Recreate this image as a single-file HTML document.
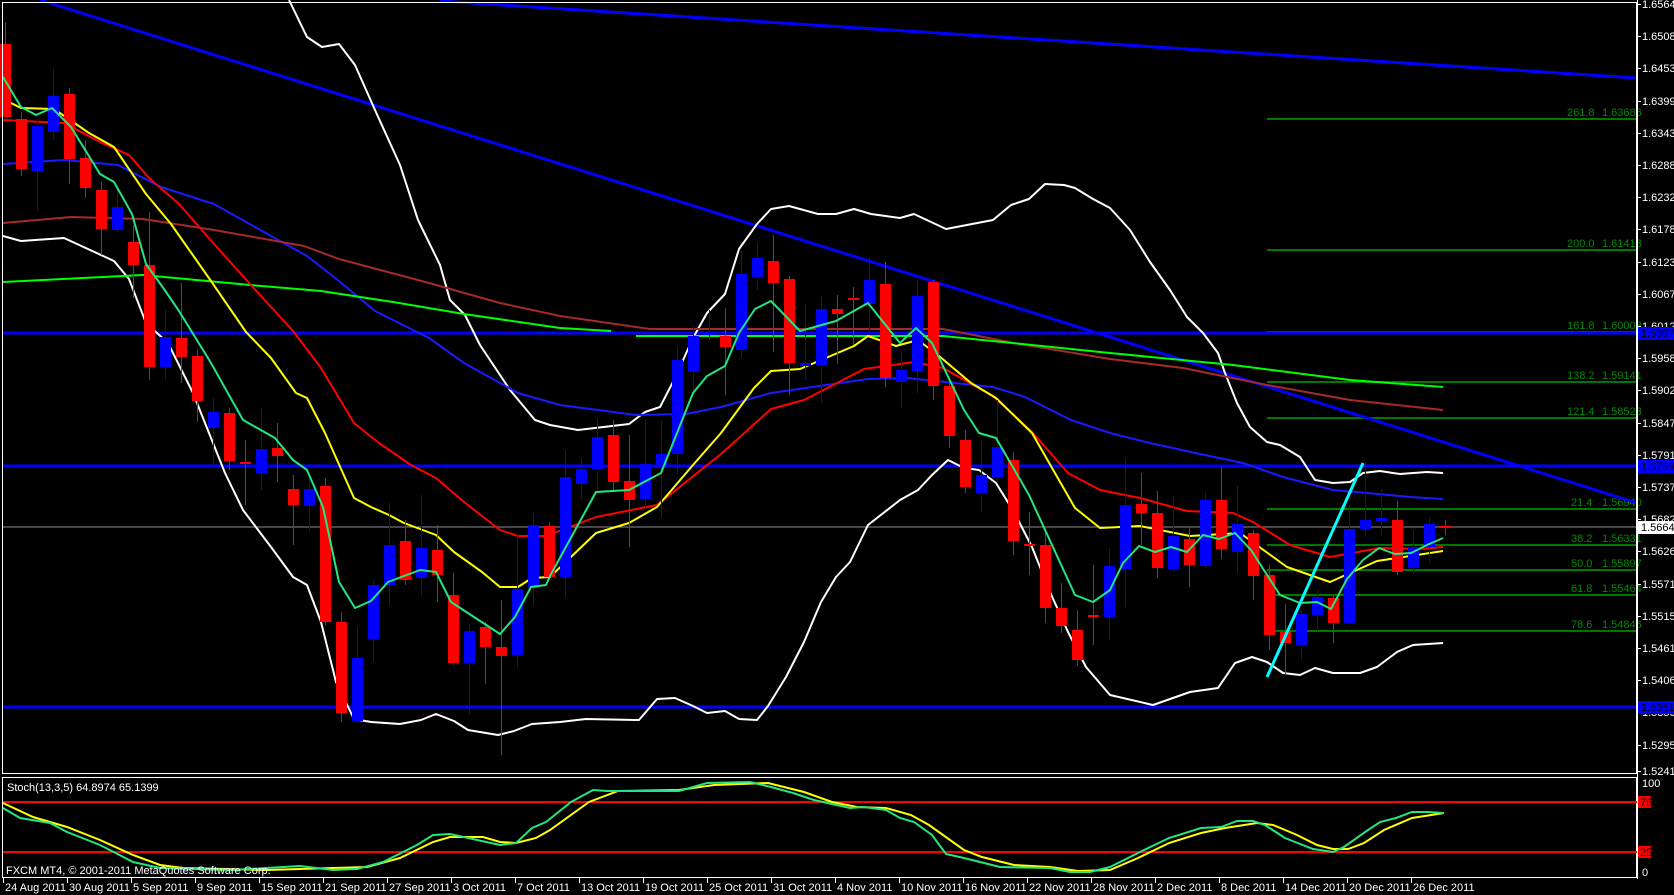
<!DOCTYPE html>
<html><head><meta charset="utf-8">
<style>
html,body{margin:0;padding:0;background:#000;width:1674px;height:895px;overflow:hidden}
svg{display:block}
text{font-family:"Liberation Sans",sans-serif;font-size:11px;fill:#fff}
</style></head><body>
<svg id="c" width="1674" height="895" viewBox="0 0 1674 895" xmlns="http://www.w3.org/2000/svg">
<rect width="1674" height="895" fill="#000"/>
<g stroke="#007800" stroke-width="2" fill="none">
<line x1="1267" y1="119" x2="1637" y2="119"/>
<line x1="1267" y1="250" x2="1637" y2="250"/>
<line x1="1267" y1="332" x2="1637" y2="332"/>
<line x1="1267" y1="382" x2="1637" y2="382"/>
<line x1="1267" y1="418" x2="1637" y2="418"/>
<line x1="1267" y1="509" x2="1637" y2="509"/>
<line x1="1267" y1="545" x2="1637" y2="545"/>
<line x1="1267" y1="570" x2="1637" y2="570"/>
<line x1="1267" y1="595" x2="1637" y2="595"/>
<line x1="1267" y1="631" x2="1637" y2="631"/>
</g>
<g font-size="11" style="fill:#008a00">
<text x="1567" y="116" style="fill:#008a00">261.8</text><text x="1602" y="116" style="fill:#008a00">1.63686</text>
<text x="1567" y="247" style="fill:#008a00">200.0</text><text x="1602" y="247" style="fill:#008a00">1.61413</text>
<text x="1567" y="329" style="fill:#008a00">161.8</text><text x="1602" y="329" style="fill:#008a00">1.60008</text>
<text x="1567" y="379" style="fill:#008a00">138.2</text><text x="1602" y="379" style="fill:#008a00">1.59141</text>
<text x="1567" y="415" style="fill:#008a00">121.4</text><text x="1602" y="415" style="fill:#008a00">1.58523</text>
<text x="1571" y="506" style="fill:#008a00">21.4</text><text x="1602" y="506" style="fill:#008a00">1.56940</text>
<text x="1571" y="542" style="fill:#008a00">38.2</text><text x="1602" y="542" style="fill:#008a00">1.56331</text>
<text x="1571" y="567" style="fill:#008a00">50.0</text><text x="1602" y="567" style="fill:#008a00">1.55897</text>
<text x="1571" y="592" style="fill:#008a00">61.8</text><text x="1602" y="592" style="fill:#008a00">1.55464</text>
<text x="1571" y="628" style="fill:#008a00">78.6</text><text x="1602" y="628" style="fill:#008a00">1.54846</text>
</g>
<line x1="3" y1="527" x2="1637" y2="527" stroke="#8a8a95" stroke-width="1"/>
<g stroke="#0000ff" stroke-width="3">
<line x1="3" y1="333" x2="1637" y2="333"/>
<line x1="3" y1="466" x2="1637" y2="466"/>
<line x1="3" y1="707" x2="1637" y2="707"/>
<line x1="40" y1="0" x2="1637" y2="503"/>
<line x1="440" y1="1" x2="1637" y2="78"/>
</g>
<g fill="none" stroke-width="2" stroke-linejoin="round">
<polyline stroke="#fff" points="289,0 307,37 322,47 339,44 355,65 375,110 400,165 418,220 440,265 450,300 465,315 480,345 510,390 535,420 550,425 578,430 629,424 645,412 660,407 675,378 693,338 707,313 725,294 739,249 757,224 771,209 789,206 818,214 836,214 854,209 871,214 900,218 914,214 946,229 993,220 1011,205 1029,199 1045,184 1064,185 1075,188 1093,199 1110,208 1130,230 1150,262 1170,290 1187,317 1203,333 1218,353 1225,373 1237,403 1250,427 1267,442 1280,445 1300,457 1315,480 1333,483 1350,482 1363,473 1380,471 1400,474 1427,472 1443,473"/>
<polyline stroke="#fff" points="3,236 21,241 64,238 114,261 129,279 146,323 168,343 193,393 225,473 243,510 271,547 293,577 307,585 321,622 336,682 354,719 371,722 400,724 421,720 436,714 454,721 468,730 498,735 514,731 532,724 560,722 586,719 639,720 657,699 675,698 693,706 707,713 725,711 739,719 757,720 768,706 786,677 804,642 821,602 836,577 850,562 868,525 900,500 918,490 932,475 948,460 964,468 979,470 996,483 1014,512 1032,547 1050,592 1068,632 1086,667 1110,695 1153,705 1190,692 1218,688 1235,663 1252,657 1267,662 1283,673 1300,675 1315,668 1333,673 1360,673 1377,667 1397,652 1413,645 1443,643"/>
<polyline stroke="#1a1aff" points="3,164 64,160 118,165 161,187 214,204 271,236 307,256 339,281 375,311 429,338 464,363 518,393 560,405 636,415 686,414 721,407 771,393 868,379 907,378 993,387 1025,397 1071,420 1110,433 1150,443 1200,454 1243,463 1283,477 1333,490 1367,493 1410,497 1443,499"/>
<polyline stroke="#a52a2a" points="3,223 71,217 143,219 214,230 304,246 339,259 429,283 500,303 560,316 650,329 943,329 1014,343 1110,359 1183,368 1267,385 1350,400 1443,410"/>
<polyline stroke="#00ff00" points="3,282 143,275 250,285 321,291 393,302 464,314 560,328 611,331"/>
<polyline stroke="#00ff00" points="636,336 818,336 943,336 1110,353 1233,365 1350,380 1443,387"/>
<polyline stroke="#ff0000" points="3,120 64,123 100,142 129,155 150,179 179,204 214,244 250,284 293,331 321,368 354,423 379,443 411,465 436,478 464,502 500,530 518,536 546,536 596,517 657,505 721,454 771,409 804,400 864,369 914,362 943,368 993,396 1032,432 1068,473 1100,490 1140,498 1187,511 1233,513 1253,522 1290,545 1330,557 1380,548 1420,549 1443,547"/>
<polyline stroke="#ffff00" points="3,99 21,108 54,109 89,133 114,147 146,194 171,224 211,281 246,332 271,358 296,393 307,398 325,433 354,498 371,507 389,515 404,523 436,535 454,552 482,572 500,587 518,587 532,578 550,577 596,533 629,523 657,507 693,465 721,433 754,388 771,371 800,369 854,346 868,336 896,346 918,340 939,356 971,383 996,398 1032,433 1075,508 1100,528 1140,526 1190,536 1240,533 1287,567 1330,582 1377,561 1443,551"/>
</g>
<g id="candles"></g>
<g fill="none" stroke-width="2" stroke-linejoin="round">
<polyline stroke="#22e67f" points="3,77 21,107 36,115 52,108 71,127 100,174 114,182 132,214 146,264 164,289 179,311 211,363 243,420 275,438 293,460 307,470 323,507 339,582 355,608 371,601 388,582 420,570 436,572 451,602 500,634 515,617 531,587 546,585 550,576 596,492 629,490 661,473 693,393 707,376 725,366 739,333 755,309 771,301 800,331 836,321 868,303 900,343 916,328 932,343 964,410 979,433 996,438 1029,495 1075,595 1093,602 1110,590 1123,563 1139,546 1155,552 1171,547 1187,552 1203,535 1219,539 1235,533 1251,550 1280,595 1300,603 1317,602 1331,609 1347,579 1363,560 1379,548 1395,554 1411,553 1427,545 1443,538"/>
</g>
<line x1="1267" y1="677" x2="1363" y2="463" stroke="#00ffff" stroke-width="3"/>
<rect x="2.5" y="2.5" width="1634" height="771" fill="none" stroke="#fff" stroke-width="1"/>
<rect x="2.5" y="777.5" width="1634" height="100" fill="none" stroke="#fff" stroke-width="1"/>
<g id="axis"></g>
<rect x="1638" y="327" width="36" height="13" fill="#0000ff"/><text x="1641" y="337" style="fill:#000">1.59976</text>
<rect x="1638" y="460" width="36" height="13" fill="#0000ff"/><text x="1641" y="470" style="fill:#000">1.57698</text>
<rect x="1638" y="701" width="36" height="13" fill="#0000ff"/><text x="1641" y="711" style="fill:#000">1.53519</text>
<rect x="1638" y="521" width="36" height="13" fill="#fff"/><text x="1641" y="531" style="fill:#000">1.56649</text>
<line x1="3" y1="802" x2="1637" y2="802" stroke="#ff0000" stroke-width="2"/>
<line x1="3" y1="852" x2="1637" y2="852" stroke="#ff0000" stroke-width="2"/>
<g fill="none" stroke-width="2">
<polyline stroke="#ffff00" points="3,803 33,817 67,827 100,840 133,855 160,865 183,868 267,870 333,868 367,867 400,858 433,842 450,837 483,837 500,842 516,843 536,838 550,830 589,802 618,791 679,790 714,785 768,783 804,792 832,802 857,807 886,808 911,815 929,825 964,850 982,857 1014,865 1050,867 1078,871 1110,870 1138,858 1169,843 1201,833 1225,828 1257,823 1273,825 1297,835 1317,845 1333,849 1348,849 1364,843 1384,830 1412,818 1444,813"/>
<polyline stroke="#22e67f" points="3,808 20,818 50,823 67,832 100,845 133,862 160,868 233,870 300,866 333,870 357,869 383,862 417,845 433,835 450,834 500,845 516,843 532,828 546,822 571,802 593,790 607,791 679,791 707,783 750,782 771,787 793,793 814,800 850,808 864,807 886,810 900,818 914,822 932,835 946,854 964,858 1000,867 1050,868 1070,872 1090,872 1110,867 1142,851 1169,838 1201,828 1221,827 1237,821 1253,821 1265,825 1285,838 1313,849 1333,852 1344,847 1368,830 1380,822 1396,818 1412,812 1428,812 1444,813"/>
</g>
<text x="7" y="791">Stoch(13,3,5) 64.8974 65.1399</text>
<text x="6" y="874">FXCM MT4, © 2001-2011 MetaQuotes Software Corp.</text>
<text x="1642" y="787">100</text>
<rect x="1638" y="796" width="13" height="12" fill="#ff0000"/><text x="1640" y="806" style="fill:#000">75</text>
<rect x="1638" y="846" width="13" height="12" fill="#ff0000"/><text x="1640" y="856" style="fill:#000">25</text>
<text x="1642" y="876">0</text>
<g id="dates"></g>
</svg>
<script>
var NS="http://www.w3.org/2000/svg";
function el(p,t,a,txt){var e=document.createElementNS(NS,t);for(var k in a)e.setAttribute(k,a[k]);if(txt)e.textContent=txt;p.appendChild(e);return e;}
var D=[[44,117,'r',22,117],[119,169,'r',112,176],[126,171,'b',118,211],[96,132,'b',68,140],[94,159,'r',88,184],[158,188,'r',140,198],[190,229,'r',182,255],[207,230,'b',185,232],[242,265,'r',225,298],[265,367,'r',212,380],[337,367,'b',310,380],[338,357,'r',283,383],[356,401,'r',350,422],[412,428,'b',398,465],[413,461,'r',408,470],[462,464,'r',440,505],[449,473,'b',408,490],[448,456,'r',423,482],[489,505,'r',475,545],[489,506,'b',475,532],[486,622,'r',478,626],[622,713,'r',612,722],[658,721,'b',627,723],[585,639,'b',580,662],[545,585,'b',503,605],[541,580,'r',520,585],[548,578,'b',495,596],[550,575,'r',525,602],[595,663,'r',573,665],[631,663,'b',624,714],[627,647,'r',622,684],[647,656,'r',600,755],[589,655,'b',535,668],[525,588,'b',512,605],[526,577,'r',522,580],[477,577,'b',450,597],[469,484,'b',458,500],[437,469,'b',418,490],[435,482,'r',420,490],[481,500,'r',435,547],[464,499,'b',420,510],[454,468,'b',420,518],[360,454,'b',347,475],[336,372,'b',326,390],[333,335,'b',310,340],[336,347,'r',308,395],[274,350,'b',250,358],[258,277,'b',243,290],[261,283,'r',235,352],[279,363,'r',276,395],[363,366,'b',304,380],[309,365,'b',296,403],[309,314,'r',295,364],[298,300,'r',287,345],[280,304,'b',257,335],[284,378,'r',262,387],[370,382,'b',350,408],[296,371,'b',280,393],[282,386,'r',280,400],[386,436,'r',380,448],[440,487,'r',430,493],[475,493,'b',440,512],[447,477,'b',400,482],[460,541,'r',452,555],[544,545,'r',512,575],[545,608,'r',533,623],[608,626,'r',583,633],[630,660,'r',610,666],[615,617,'r',565,645],[566,617,'b',548,640],[505,569,'b',459,607],[504,513,'r',473,545],[513,568,'r',491,578],[536,569,'b',496,572],[539,565,'r',527,587],[500,566,'b',492,568],[500,549,'r',467,559],[524,552,'b',486,573],[533,576,'r',530,600],[575,635,'r',565,650],[632,643,'r',604,675],[614,645,'b',610,660],[597,615,'b',589,633],[598,623,'r',595,643],[529,623,'b',505,625],[520,529,'b',462,537],[518,521,'b',489,535],[520,572,'r',501,575],[547,568,'b',530,574],[524,547,'b',517,563],[526,527,'r',520,535]];
var g=document.getElementById('candles');
D.forEach(function(d,i){var x=5+16*i;var c=d[2]=='r'?'#ff0000':'#0000ff';
el(g,'line',{x1:x+0.5,x2:x+0.5,y1:d[3],y2:d[4],stroke:c,'stroke-width':1});
var h=Math.max(2,d[1]-d[0]);el(g,'rect',{x:x-5,y:d[0],width:11,height:h,fill:c});});
var ax=document.getElementById('axis');
var P=["1.65640","1.65085","1.64530","1.63990","1.63435","1.62880","1.62325","1.61785","1.61230","1.60675","1.60120","1.59580","1.59025","1.58470","1.57915","1.57375","1.56820","1.56265","1.55710","1.55155","1.54615","1.54060","1.53505","1.52950","1.52410"];
P.forEach(function(p,i){var y=Math.round(4+i*32.2);if(i==P.length-1)y=771;
el(ax,'line',{x1:1637,x2:1641,y1:y+0.5,y2:y+0.5,stroke:'#fff'});el(ax,'text',{x:1642,y:y+4},p);});
el(ax,'line',{x1:1637.5,x2:1637.5,y1:0,y2:879,stroke:'#fff'});
var dg=document.getElementById('dates');
var DT=["24 Aug 2011","30 Aug 2011","5 Sep 2011","9 Sep 2011","15 Sep 2011","21 Sep 2011","27 Sep 2011","3 Oct 2011","7 Oct 2011","13 Oct 2011","19 Oct 2011","25 Oct 2011","31 Oct 2011","4 Nov 2011","10 Nov 2011","16 Nov 2011","22 Nov 2011","28 Nov 2011","2 Dec 2011","8 Dec 2011","14 Dec 2011","20 Dec 2011","26 Dec 2011"];
DT.forEach(function(t,i){var x=3+64*i;el(dg,'line',{x1:x+0.5,x2:x+0.5,y1:878,y2:883,stroke:'#fff'});el(dg,'text',{x:x+2,y:891},t);});
</script>
</body></html>
